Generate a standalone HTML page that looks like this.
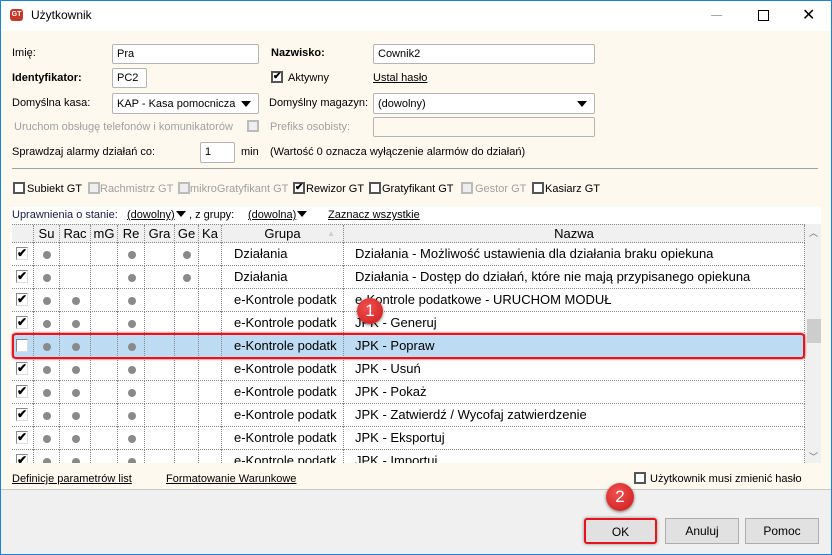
<!DOCTYPE html>
<html><head><meta charset="utf-8"><style>
*{margin:0;padding:0;box-sizing:border-box}
body{width:832px;height:555px;overflow:hidden;font-family:"Liberation Sans",Arial,sans-serif;font-size:11px;color:#000;background:#f0f0f0;position:relative}
.a{position:absolute;white-space:nowrap}
.win{position:absolute;left:0;top:0;width:832px;height:555px;border:1px solid #1883d7}
.title{position:absolute;left:1px;top:1px;width:830px;height:30px;background:#fff}
.cream{position:absolute;left:1px;top:31px;width:830px;height:459px;background:#fef9ee;border-bottom:1px solid #c8c8c8}
.inp{position:absolute;background:#fff;border:1px solid #b4b4b4;border-radius:2px;padding:3px 0 0 4px;font-size:11px}
.dis{background:#fef9ee}
.tri{position:absolute;width:0;height:0;border-left:5px solid transparent;border-right:5px solid transparent;border-top:6px solid #000}
.cb{position:absolute;width:12px;height:12px;border:2px solid #555;background:#fff}
.cbg{border-color:#bbb;background:#eee}
.u{text-decoration:underline}
.grid{position:absolute;left:12px;top:224px;width:793px;height:239px;overflow:hidden;background:#fff}
.row{position:absolute;left:0;width:793px;height:23px;border-bottom:1px dotted #888;font-size:13px}
.c{position:absolute;top:0;height:23px;border-right:1px dotted #888;line-height:22px}
.dot{position:absolute;top:8px;width:8px;height:8px;border-radius:50%;background:#8a8a8a}
.rcb{position:absolute;left:4px;top:4px;width:12px;height:13px;border:1px solid #888;border-right-color:#ddd;border-bottom-color:#ddd;background:#fff;font-size:12px;line-height:10px;font-weight:bold;text-align:center}
.btn{position:absolute;top:518px;height:26px;background:#e1e1e1;border:1px solid #adadad;text-align:center;line-height:24px;font-size:12px}
.badge{position:absolute;border-radius:50%;background:radial-gradient(circle at 40% 35%,#f05050,#cc1a1a);color:#fff;text-align:center;font-size:17px;box-shadow:0 1px 3px rgba(0,0,0,.5)}
</style></head><body>
<div class="win"></div>
<div class="title"></div>
<div class="a" style="left:10px;top:9px;width:13px;height:12px;border-radius:3px;background:#c0392b;color:#fff;font-size:7px;font-weight:bold;line-height:12px;text-align:center">GT</div>
<div class="a" style="left:31px;top:8px;font-size:12px">Użytkownik</div>
<div class="a" style="left:711px;top:15px;width:11px;height:1px;background:#aaa"></div>
<div class="a" style="left:758px;top:10px;width:11px;height:11px;border:1px solid #000"></div>
<div class="a" style="left:802px;top:5px;font-size:16px;font-weight:300">✕</div>
<div class="cream"></div>

<div class="a" style="left:12px;top:47px">Imię:</div>
<div class="inp" style="left:112px;top:44px;width:147px;height:20px">Pra</div>
<div class="a" style="left:271px;top:47px;font-weight:bold">Nazwisko:</div>
<div class="inp" style="left:373px;top:44px;width:222px;height:20px">Cownik2</div>

<div class="a" style="left:12px;top:72px;font-weight:bold">Identyfikator:</div>
<div class="inp" style="left:112px;top:68px;width:35px;height:20px">PC2</div>
<div class="cb" style="left:271px;top:71px;font-size:10px;line-height:8px;font-weight:bold">✔</div>
<div class="a" style="left:288px;top:72px">Aktywny</div>
<div class="a u" style="left:373px;top:72px">Ustal hasło</div>

<div class="a" style="left:12px;top:97px">Domyślna kasa:</div>
<div class="inp" style="left:112px;top:93px;width:147px;height:21px;padding-top:4px">KAP - Kasa pomocnicza</div>
<div class="tri" style="left:241px;top:101px"></div>
<div class="a" style="left:269px;top:97px">Domyślny magazyn:</div>
<div class="inp" style="left:373px;top:93px;width:222px;height:21px;padding-top:4px">(dowolny)</div>
<div class="tri" style="left:577px;top:101px"></div>

<div class="a" style="left:14px;top:121px;color:#a0a0a0">Uruchom obsługę telefonów i komunikatorów</div>
<div class="cb cbg" style="left:247px;top:120px"></div>
<div class="a" style="left:270px;top:121px;color:#a0a0a0">Prefiks osobisty:</div>
<div class="inp dis" style="left:373px;top:117px;width:222px;height:20px"></div>

<div class="a" style="left:12px;top:146px">Sprawdzaj alarmy działań co:</div>
<div class="inp" style="left:200px;top:142px;width:35px;height:21px">1</div>
<div class="a" style="left:241px;top:146px">min</div>
<div class="a" style="left:270px;top:146px">(Wartość 0 oznacza wyłączenie alarmów do działań)</div>
<div class="a" style="left:12px;top:168px;width:806px;height:1px;background:#a0a0a0"></div>

<div class="cb" style="left:13px;top:182px"></div><div class="a" style="left:27px;top:183px">Subiekt GT</div>
<div class="cb cbg" style="left:88px;top:182px"></div><div class="a" style="left:100px;top:183px;color:#a0a0a0">Rachmistrz GT</div>
<div class="cb cbg" style="left:178px;top:182px"></div><div class="a" style="left:190px;top:183px;color:#a0a0a0">mikroGratyfikant GT</div>
<div class="cb" style="left:293px;top:182px;font-size:10px;line-height:8px;font-weight:bold">✔</div><div class="a" style="left:306px;top:183px">Rewizor GT</div>
<div class="cb" style="left:369px;top:182px"></div><div class="a" style="left:382px;top:183px">Gratyfikant GT</div>
<div class="cb cbg" style="left:461px;top:182px"></div><div class="a" style="left:475px;top:183px;color:#a0a0a0">Gestor GT</div>
<div class="cb" style="left:532px;top:182px"></div><div class="a" style="left:545px;top:183px">Kasiarz GT</div>

<div class="a" style="left:10px;top:207px;width:811px;height:256px;background:#fff"></div>
<div class="a" style="left:12px;top:209px;color:#1a1a4a">Uprawnienia o stanie:</div>
<div class="a u" style="left:127px;top:209px">(dowolny)</div><div class="tri" style="left:176px;top:211px"></div>
<div class="a" style="left:189px;top:209px">, z grupy:</div>
<div class="a u" style="left:248px;top:209px">(dowolna)</div><div class="tri" style="left:297px;top:211px"></div>
<div class="a u" style="left:328px;top:209px">Zaznacz wszystkie</div>

<div class="grid">
<div class="row" style="top:0;height:19px;background:#f0f0f0;border-top:1px dotted #888">
<div class="c" style="left:0;width:22px;height:18px"></div>
<div class="c" style="left:22px;width:26px;height:18px;line-height:17px;text-align:center">Su</div>
<div class="c" style="left:48px;width:31px;height:18px;line-height:17px;text-align:center">Rac</div>
<div class="c" style="left:79px;width:27px;height:18px;line-height:17px;text-align:center">mG</div>
<div class="c" style="left:106px;width:27px;height:18px;line-height:17px;text-align:center">Re</div>
<div class="c" style="left:133px;width:30px;height:18px;line-height:17px;text-align:center">Gra</div>
<div class="c" style="left:163px;width:24px;height:18px;line-height:17px;text-align:center">Ge</div>
<div class="c" style="left:187px;width:23px;height:18px;line-height:17px;text-align:center">Ka</div>
<div class="c" style="left:210px;width:122px;height:18px;line-height:17px;text-align:center">Grupa<span style="position:absolute;right:8px;color:#ccc;font-size:8px">▲</span></div>
<div class="c" style="left:332px;width:461px;height:18px;line-height:17px;text-align:center">Nazwa</div>
</div>
<div id="rows"></div>
</div>
<div class="a" style="left:805px;top:224px;width:16px;height:239px;background:#f0f0f0"></div>
<div class="a" style="left:809px;top:226px;font-size:9px;color:#666">︿</div>
<div class="a" style="left:807px;top:319px;width:14px;height:24px;background:#cdcdcd"></div>
<div class="a" style="left:809px;top:450px;font-size:9px;color:#666">﹀</div>
<div class="a" style="left:12px;top:333px;width:793px;height:26px;border:2px solid #e8141c;border-radius:4px;box-shadow:0 0 2px #e8141c"></div>

<div class="a u" style="left:12px;top:473px">Definicje parametrów list</div>
<div class="a u" style="left:166px;top:473px">Formatowanie Warunkowe</div>
<div class="cb" style="left:634px;top:472px"></div>
<div class="a" style="left:650px;top:473px">Użytkownik musi zmienić hasło</div>

<div class="btn" style="left:584px;width:73px;border:2px solid #e8141c;border-radius:3px;box-shadow:0 0 3px #888">OK</div>
<div class="btn" style="left:665px;width:74px">Anuluj</div>
<div class="btn" style="left:745px;width:74px">Pomoc</div>

<div class="badge" style="left:357px;top:298px;width:26px;height:26px;line-height:26px">1</div>
<div class="badge" style="left:606px;top:483px;width:28px;height:28px;line-height:28px">2</div>

<script>
var R=[["Działania","Działania - Możliwość ustawienia dla działania braku opiekuna",[1,0,0,1,0,1],1],
["Działania","Działania - Dostęp do działań, które nie mają przypisanego opiekuna",[1,0,0,1,0,1],1],
["e-Kontrole podatk","e-Kontrole podatkowe - URUCHOM MODUŁ",[1,1,0,1,0,0],1],
["e-Kontrole podatk","JPK - Generuj",[1,1,0,1,0,0],1],
["e-Kontrole podatk","JPK - Popraw",[1,1,0,1,0,0],0],
["e-Kontrole podatk","JPK - Usuń",[1,1,0,1,0,0],1],
["e-Kontrole podatk","JPK - Pokaż",[1,1,0,1,0,0],1],
["e-Kontrole podatk","JPK - Zatwierdź / Wycofaj zatwierdzenie",[1,1,0,1,0,0],1],
["e-Kontrole podatk","JPK - Eksportuj",[1,1,0,1,0,0],1],
["e-Kontrole podatk","JPK - Importuj",[1,1,0,1,0,0],1]];
var L=[22,48,79,106,133,163,187,210,332],W=[26,31,27,27,30,24,23,122,461],h="";
R.forEach(function(r,i){var bg=i==4?"#bddbf2":"#fff";
h+='<div class="row" style="top:'+(19+i*23)+'px;background:'+bg+'"><div class="c" style="left:0;width:22px"><div class="rcb">'+(r[3]?'✔':'')+'</div></div>';
for(var k=0;k<7;k++){h+='<div class="c" style="left:'+L[k]+'px;width:'+W[k]+'px">'+((k<6&&r[2][k])?'<div class="dot" style="left:'+(W[k]/2-4)+'px"></div>':'')+'</div>';}
h+='<div class="c" style="left:210px;width:122px;padding-left:12px">'+r[0]+'</div><div class="c" style="left:332px;width:461px;padding-left:11px">'+r[1]+'</div></div>';});
document.getElementById("rows").innerHTML=h;
</script>
</body></html>
